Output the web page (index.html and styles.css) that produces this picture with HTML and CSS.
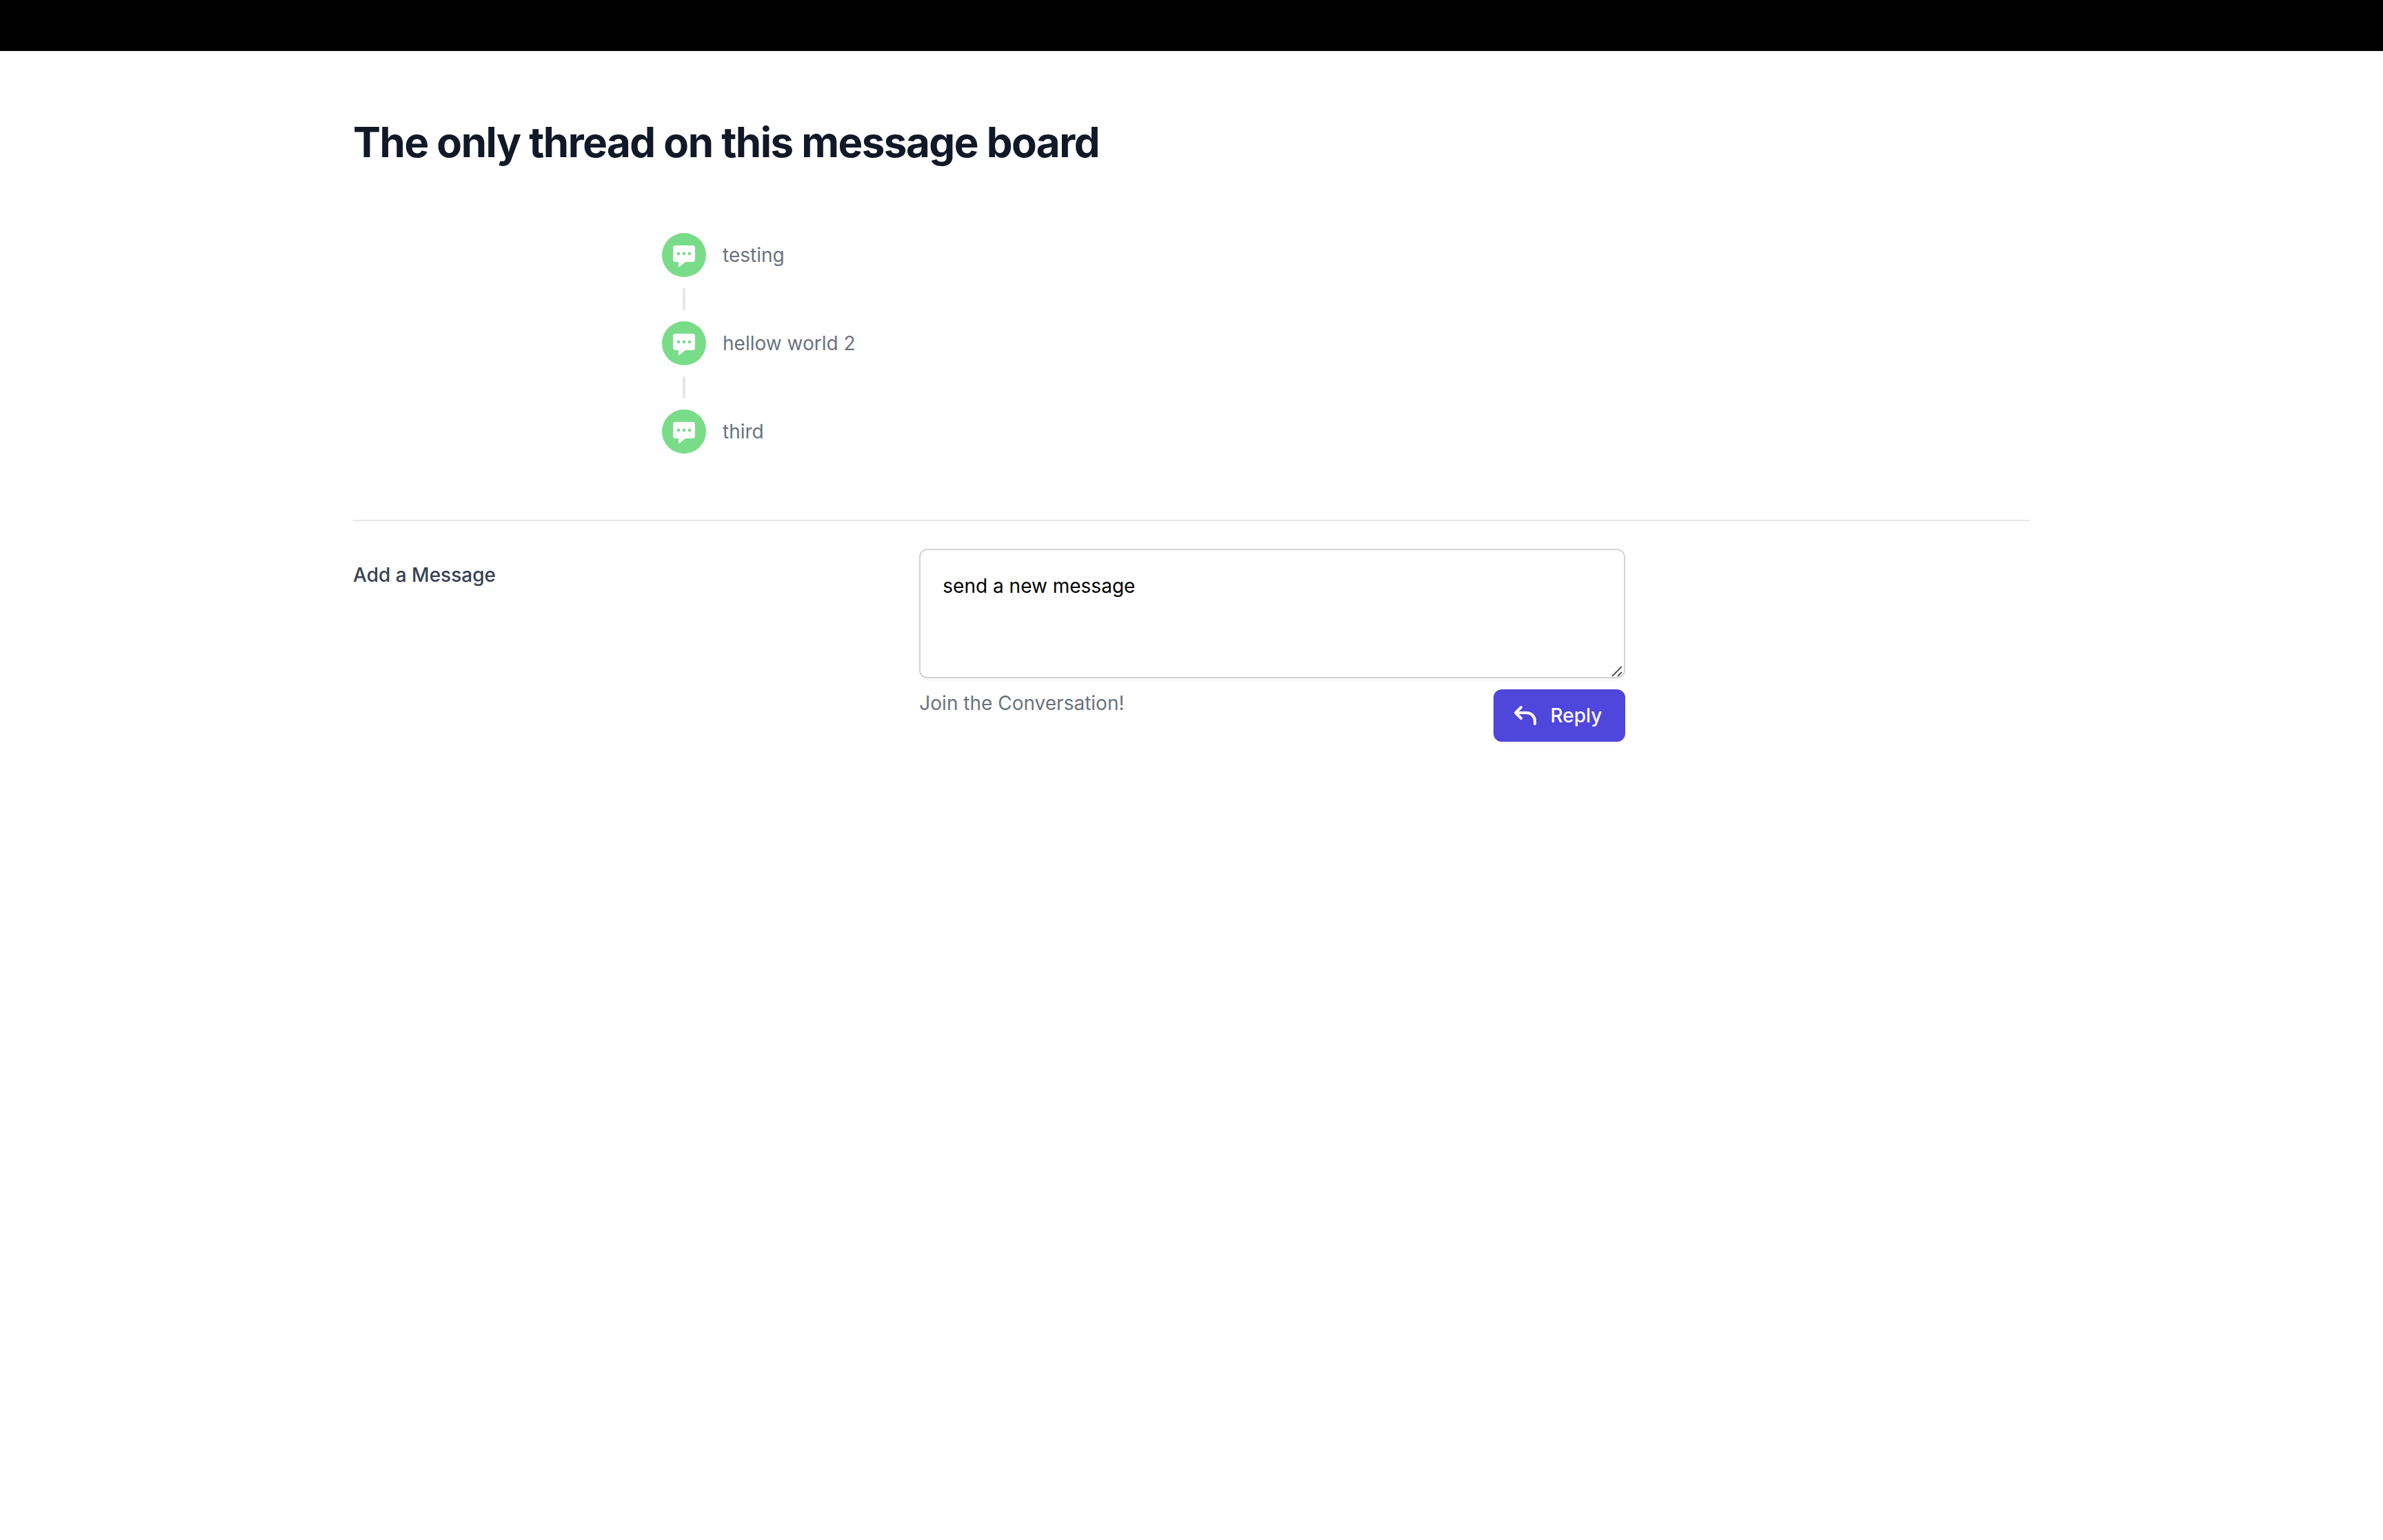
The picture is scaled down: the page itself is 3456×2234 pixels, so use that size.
FILE: index.html
```html
<!DOCTYPE html>
<html lang="en">
<head>
  <meta charset="utf-8">
  <meta name="viewport" content="width=device-width, initial-scale=1">
  <title>Message board</title>
  <link rel="stylesheet" href="styles.css">
</head>
<body>
  <svg class="sprite" aria-hidden="true">
    <symbol id="icon-chat" viewBox="0 0 20 20">
      <path fill-rule="evenodd" clip-rule="evenodd" d="M18 5v8a2 2 0 01-2 2h-5l-5 4v-4H4a2 2 0 01-2-2V5a2 2 0 012-2h12a2 2 0 012 2zM7 8H5v2h2V8zm2 0h2v2H9V8zm6 0h-2v2h2V8z"/>
    </symbol>
  </svg>
  <header class="topbar"></header>
  <main class="page">
    <h1 class="title">The only thread on this message board</h1>
    <ul class="thread">
      <li class="message">
        <span class="badge"><svg class="icon" aria-hidden="true"><use href="#icon-chat"/></svg></span>
        <p class="message-text">testing</p>
      </li>
      <li class="message">
        <span class="badge"><svg class="icon" aria-hidden="true"><use href="#icon-chat"/></svg></span>
        <p class="message-text">hellow world 2</p>
      </li>
      <li class="message">
        <span class="badge"><svg class="icon" aria-hidden="true"><use href="#icon-chat"/></svg></span>
        <p class="message-text">third</p>
      </li>
    </ul>
    <form class="reply-form">
      <label class="reply-label" for="message">Add a Message</label>
      <div class="reply-field">
        <div class="input-wrap">
          <textarea class="input" id="message" name="message" rows="3" spellcheck="false">send a new message</textarea>
          <svg class="grip" viewBox="0 0 16 16" aria-hidden="true"><path d="M1 15L15 1M9 15l6-6"/></svg>
        </div>
        <div class="reply-footer">
          <p class="hint">Join the Conversation!</p>
          <button class="button" type="submit">
            <svg class="icon" viewBox="0 0 20 20" aria-hidden="true"><path fill-rule="evenodd" clip-rule="evenodd" d="M7.707 3.293a1 1 0 010 1.414L5.414 7H11a7 7 0 017 7v2a1 1 0 11-2 0v-2a5 5 0 00-5-5H5.414l2.293 2.293a1 1 0 11-1.414 1.414l-4-4a1 1 0 010-1.414l4-4a1 1 0 011.414 0z"/></svg>
            Reply
          </button>
        </div>
      </div>
    </form>
  </main>
</body>
</html>
```

FILE: styles.css
```css
*,
*::before,
*::after {
  box-sizing: border-box;
}

body {
  margin: 0;
  background: #fff;
  color: #111827;
  font-family: Inter, "Liberation Sans", sans-serif;
  font-size: 28px;
  line-height: 40px;
}

h1,
p,
ul {
  margin: 0;
  padding: 0;
}

.sprite {
  display: none;
}

.topbar {
  height: 74px;
  background: #000;
}

.page {
  max-width: 2560px;
  margin: 0 auto;
  padding: 96px 64px;
}

.title {
  font-size: 60px;
  line-height: 72px;
  font-weight: 700;
  letter-spacing: -0.025em;
}

.thread {
  max-width: 1536px;
  margin: 96px auto;
  list-style: none;
  display: flex;
  flex-direction: column;
  gap: 64px;
}

.message {
  position: relative;
  display: flex;
  align-items: center;
  gap: 24px;
}

/* Short connector between one message and the next */
.message:not(:last-child)::after {
  content: "";
  position: absolute;
  top: 80px;
  left: 30px;
  width: 4px;
  height: 32px;
  background: #e5e7eb;
}

.badge {
  width: 64px;
  height: 64px;
  border-radius: 50%;
  display: flex;
  align-items: center;
  justify-content: center;
  background: #79dc89;
  color: #fff;
}

.icon {
  width: 40px;
  height: 40px;
  fill: currentColor;
}

.message-text,
.hint {
  color: #6b7280;
}

.reply-form {
  display: grid;
  grid-template-columns: repeat(3, 1fr);
  gap: 32px;
  padding-top: 40px;
  border-top: 2px solid #e5e7eb;
}

.reply-label {
  padding-top: 18px;
  color: #374151;
  font-weight: 500;
}

.reply-field {
  grid-column: span 2;
  max-width: 1024px;
}

.input-wrap {
  position: relative;
}

.input {
  display: block;
  width: 100%;
  padding: 32px;
  border: 2px solid #d1d5db;
  border-radius: 12px;
  background: #fff;
  color: #000;
  font: inherit;
  resize: none;
  box-shadow: 0 2px 4px rgba(0, 0, 0, 0.05);
}

.grip {
  position: absolute;
  right: 4px;
  bottom: 2px;
  width: 16px;
  height: 16px;
  fill: none;
  stroke: #555;
  stroke-width: 2;
  pointer-events: none;
}

.reply-footer {
  display: flex;
  align-items: flex-start;
  justify-content: space-between;
  margin-top: 16px;
}

.button {
  display: flex;
  align-items: center;
  gap: 16px;
  padding: 18px 34px 18px 26px;
  border: 0;
  border-radius: 12px;
  background: #4f46db;
  color: #fff;
  font: inherit;
  font-weight: 500;
  box-shadow: 0 2px 4px rgba(0, 0, 0, 0.05);
}
```
